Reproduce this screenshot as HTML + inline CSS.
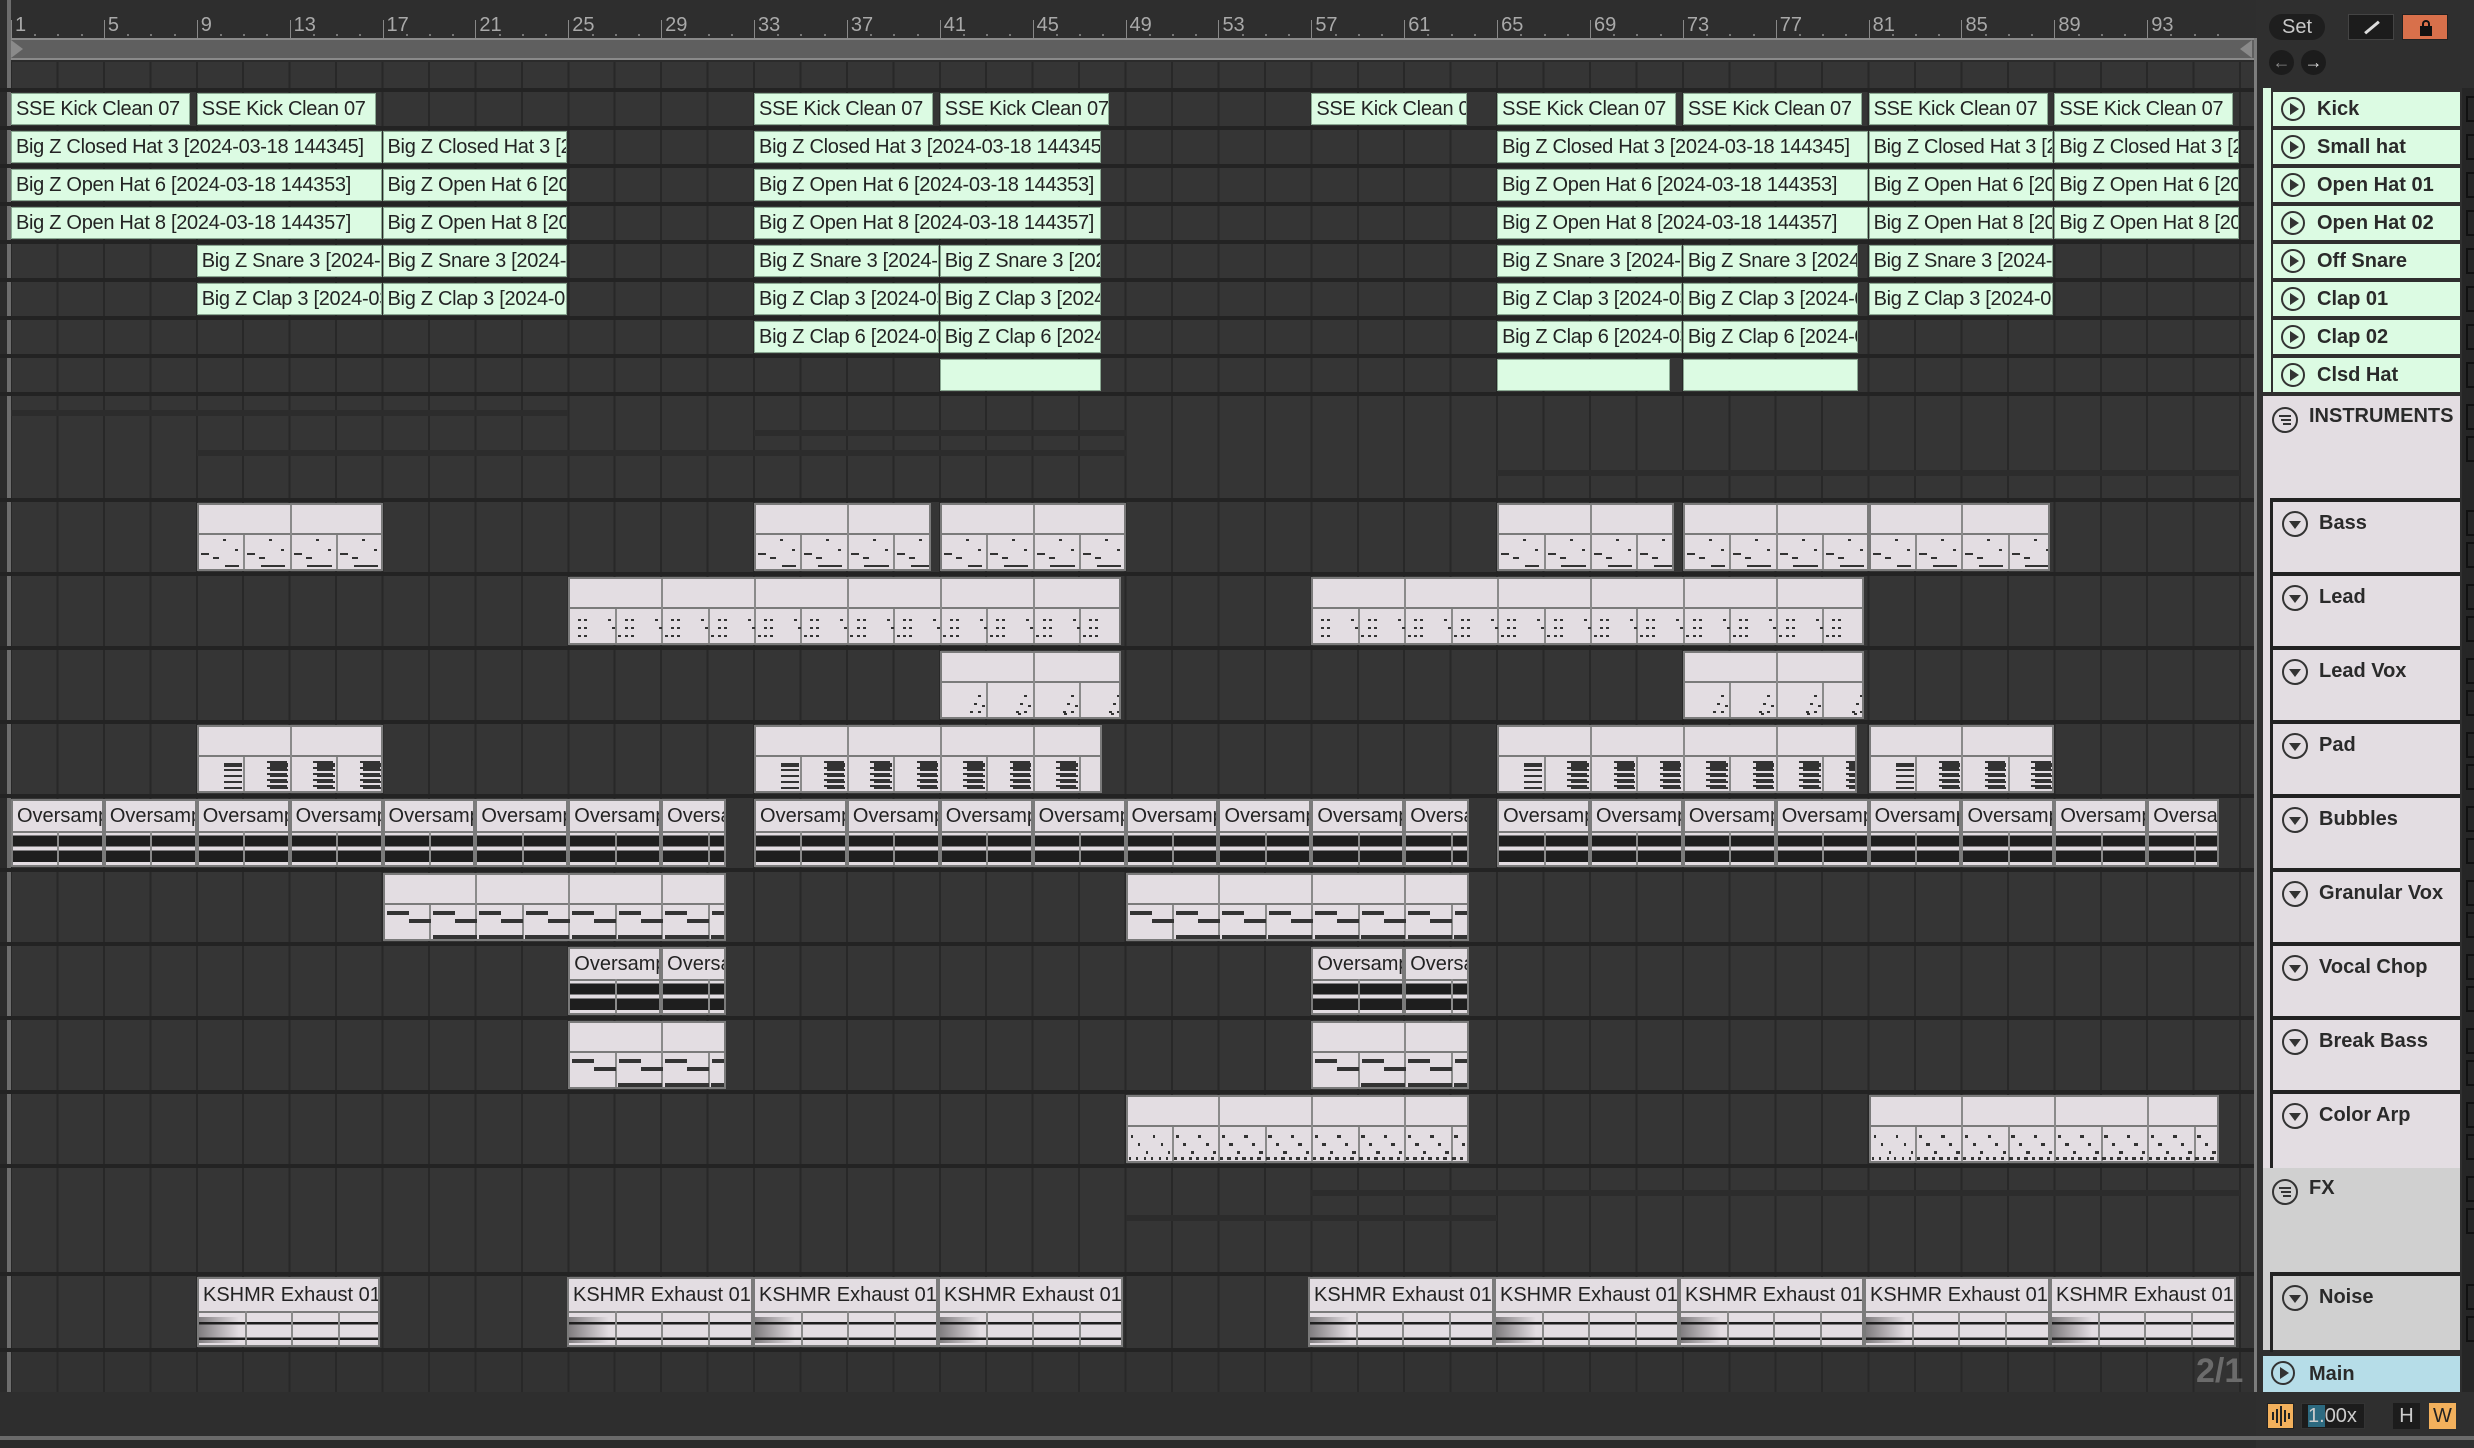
<!DOCTYPE html>
<html><head><meta charset="utf-8">
<style>
*{margin:0;padding:0;box-sizing:border-box}
body{width:2474px;height:1448px;background:#2b2b2b;position:relative;overflow:hidden;font-family:"Liberation Sans",sans-serif}
.a{position:absolute}
.row{position:absolute;left:11px;width:2245px;background-color:#353535;
background-image:repeating-linear-gradient(to right,#282828 0,#282828 2px,transparent 2px,transparent 46.44px);background-position:-1px 0}
.sep{position:absolute;left:0;width:2256px;background:#232323}
.clip{position:absolute;overflow:hidden;white-space:nowrap}
.dc{background:#dcfbe3;border:1px solid #8aa892;color:#232323;font-size:20px;line-height:30px;padding-left:4px;letter-spacing:-0.3px}
.mc{background:#e3dde2;border:2px solid #7a7a7a}
.mh{position:absolute;left:0;right:0;top:0;border-bottom:2px solid #7a7a7a}
.ac{background:#e3dde2;border:2px solid #7a7a7a;color:#232323;font-size:20px;padding-left:4px}
.hd{position:absolute;left:2273px;width:187px;color:#2a2a2a;font-weight:bold;font-size:20px}
.ic{position:absolute;width:24px;height:24px;border:2px solid #333;border-radius:50%}
.rn{position:absolute;top:14px;color:#a9a9a9;font-size:20px}
.tl{position:absolute;top:1398px;color:#9a9a9a;font-size:20px}
</style></head><body>
<div class="a" style="left:0;top:0;width:2256px;height:60px;background:#2e2e2e"></div>
<div class="a" style="left:11px;top:38px;width:2245px;height:22px;background:#5f5f5f;border-top:2px solid #8a8a8a;border-bottom:2px solid #8a8a8a"></div>
<div class="a" style="left:11px;top:40px;width:0;height:0;border-top:9px solid transparent;border-bottom:9px solid transparent;border-left:12px solid #8a8a8a"></div>
<div class="a" style="left:2240px;top:40px;width:0;height:0;border-top:9px solid transparent;border-bottom:9px solid transparent;border-right:12px solid #8a8a8a"></div>
<div class="a" style="left:7px;top:0;width:4px;height:1440px;background:#6d6d6d"></div>
<div id="g"></div>
<div class="a" style="left:2256px;top:0;width:218px;height:1448px;background:#2f2f2f"></div>
<div class="a" style="left:2254px;top:38px;width:3px;height:1354px;background:#7d7d7d"></div>
<div class="a" style="left:2462px;top:88px;width:12px;height:1304px;background:#262626"></div>
<div class="a" style="left:2269px;top:14px;width:56px;height:26px;border-radius:13px;background:#1e1e1e;color:#c8c8c8;font-size:20px;text-align:center;line-height:26px">Set</div>
<div class="a" style="left:2348px;top:14px;width:46px;height:26px;background:#1c1c1c;border:1px solid #444"><div class="a" style="left:14px;top:11px;width:18px;height:3px;background:#ddd;transform:rotate(-40deg)"></div></div>
<div class="a" style="left:2402px;top:14px;width:46px;height:26px;background:#d8704b;border:1px solid #222"><div class="a" style="left:17px;top:11px;width:12px;height:10px;background:#111"></div><div class="a" style="left:19px;top:5px;width:8px;height:9px;border:2px solid #111;border-bottom:none;border-radius:4px 4px 0 0"></div></div>
<div class="a" style="left:2269px;top:50px;width:25px;height:25px;border-radius:50%;background:#1c1c1c;color:#888;font-size:18px;text-align:center;line-height:25px">&#8592;</div>
<div class="a" style="left:2301px;top:50px;width:25px;height:25px;border-radius:50%;background:#1c1c1c;color:#ddd;font-size:18px;text-align:center;line-height:25px">&#8594;</div>
<div class="a" style="left:0;top:1392px;width:2256px;height:44px;background:#2e2e2e"></div>
<div class="a" style="left:0;top:1436px;width:2474px;height:4px;background:#6a6a6a"></div>
<div class="a" style="left:2196px;top:1352px;color:#6b6b6b;font-size:34px;font-weight:bold">2/1</div>
<div class="a" style="left:2267px;top:1403px;width:27px;height:26px;background:#f2b05c;border:1px solid #222"></div>
<svg class="a" style="left:2267px;top:1403px" width="27" height="26"><path d="M6 9v8M10 6v14M14 3v20M18 7v12M22 10v6" stroke="#222" stroke-width="2"/></svg>
<div class="a" style="left:2301px;top:1403px;width:64px;height:26px;background:#1c1c1c;border:1px solid #333;color:#ccc;font-size:20px;line-height:24px;padding-left:6px"><span style="background:#2d6a80">1.</span>00x</div>
<div class="a" style="left:2393px;top:1403px;width:27px;height:26px;background:#1c1c1c;color:#ccc;font-size:20px;text-align:center;line-height:26px">H</div>
<div class="a" style="left:2429px;top:1403px;width:27px;height:26px;background:#f2b05c;color:#222;font-size:20px;text-align:center;line-height:26px">W</div>
<script>
const X=b=>11+(b-1)*23.22;
let h='';
for(let b=1;b<=93;b+=4){let x=X(b);h+=`<div class="a" style="left:${x}px;top:20px;width:1px;height:18px;background:#888"></div><div class="rn" style="left:${x+4}px">${b}</div>`;
for(let k=1;k<4;k++)h+=`<div class="a" style="left:${X(b+k)}px;top:34px;width:2px;height:2px;background:#777"></div>`;}
const tracks=[];
function tr(top,ht){tracks.push([top,ht]);h+=`<div class="row" style="top:${top}px;height:${ht-4}px"></div><div class="sep" style="top:${top+ht-4}px;height:4px"></div>`;}
h+=`<div class="row" style="top:62px;height:26px"></div><div class="sep" style="top:88px;height:4px"></div>`;
for(let i=0;i<8;i++)tr(92+i*38,38);
tr(396,106);
for(let i=0;i<9;i++)tr(502+i*74,74);
tr(1168,108);tr(1276,76);
h+=`<div class="row" style="top:1352px;height:40px;background-color:#323232"></div>`;
[[410,1,25],[430,33,49],[450,9,49],[470,65,97],[1190,57,97],[1215,49,65]].forEach(([y,a,b])=>h+=`<div class="a" style="left:${X(a)}px;top:${y}px;width:${X(b)-X(a)}px;height:6px;background:#2c2c2c"></div>`);
function dc(r,a,b,t){let [top]=tracks[r];h+=`<div class="clip dc" style="left:${X(a)}px;top:${top+1}px;width:${X(b)-X(a)-1}px;height:32px">${t}</div>`;}
const K='SSE Kick Clean 07',CH='Big Z Closed Hat 3 [2024-03-18 144345]',O6='Big Z Open Hat 6 [2024-03-18 144353]',O8='Big Z Open Hat 8 [2024-03-18 144357]',SN='Big Z Snare 3 [2024-03-18]',C3='Big Z Clap 3 [2024-03-18]',C6='Big Z Clap 6 [2024-03-18]';
[[1,9],[9,17],[33,41],[41,48.6],[57,64],[65,73],[73,81],[81,89],[89,97]].forEach(([a,b])=>dc(0,a,b-0.25,K));
[[1,17],[17,25],[33,48],[65,81],[81,89],[89,97]].forEach(([a,b])=>{dc(1,a,b,CH);dc(2,a,b,O6);dc(3,a,b,O8);});
[[9,17],[17,25],[33,41],[41,48],[65,73],[73,80.6],[81,89]].forEach(([a,b])=>{dc(4,a,b,SN);dc(5,a,b,C3);});
[[33,41],[41,48],[65,73],[73,80.6]].forEach(([a,b])=>dc(6,a,b,C6));
[[41,48],[65,72.5],[73,80.6]].forEach(([a,b])=>dc(7,a,b,''));
function seg(a,b,inner){let s='';for(let q=a+2;q<b-0.1;q+=2)s+=`<div class="a" style="left:${X(q)-X(a)-2}px;top:${inner}px;bottom:0;width:2px;background:#8a8a8a"></div>`;return s;}
function hdiv(a,b){let s='';for(let q=a+4;q<b-0.1;q+=4)s+=`<div class="a" style="left:${X(q)-X(a)-2}px;top:0;bottom:0;width:2px;background:#8a8a8a"></div>`;return s;}
function mc(r,a,b,notes){let [top,ht]=tracks[r];let H=ht-6,hh=Math.round(H*0.44);let w=X(b)-X(a);
let n='';for(let q=a;q<b-0.1;q+=2)n+=notes(X(q)-X(a),hh);
h+=`<div class="clip mc" style="left:${X(a)}px;top:${top+1}px;width:${w}px;height:${H}px"><div class="mh" style="height:${hh}px"></div>${hdiv(a,b)}${seg(a,b,hh)}${n}</div>`;}
const dot=(x,y,w=3,hh=2)=>`<div class="a" style="left:${x}px;top:${y}px;width:${w}px;height:${hh}px;background:#333"></div>`;
const bassN=(x,y)=>dot(x+2,y+18,8)+dot(x+14,y+22,6)+dot(x+24,y+4)+dot(x+36,y+14)+dot(x+26,y+30,14)+dot(x+62,y+30,14);
const leadN=(x,y)=>dot(x+8,y+10)+dot(x+14,y+10)+dot(x+8,y+18)+dot(x+14,y+18)+dot(x+8,y+26)+dot(x+38,y+10)+dot(x+42,y+18)+dot(x+48,y+26)+dot(x+14,y+26);
const voxN=(x,y)=>dot(x+28,y+28)+dot(x+32,y+20)+dot(x+36,y+12)+dot(x+36,y+28)+dot(x+40,y+22)+dot(x+76,y+30);
const padN=(x,y)=>{let s='';for(let k=0;k<5;k++)s+=dot(x+25,y+6+k*6,18,k==0?4:2)+dot(x+68,y+4+k*6,20,2);return s;};
const granN=(x,y)=>dot(x+2,y+6,22,4)+dot(x+24,y+14,22,4)+dot(x+48,y+30,44,4);
const arpN=(x,y)=>{let s='';for(let k=0;k<12;k++)s+=dot(x+3+k*7.5,y+8+(k%3)*8,2,3)+dot(x+1+k*7.5,y+30,2,3);return s;};
[[9,17],[33,40.6],[41,49],[65,72.6],[73,81],[81,88.8]].forEach(([a,b])=>mc(9,a,b,bassN));
[[25,48.8],[57,80.8]].forEach(([a,b])=>mc(10,a,b,leadN));
[[41,48.8],[73,80.8]].forEach(([a,b])=>mc(11,a,b,voxN));
[[9,17],[33,48],[65,80.5],[81,89]].forEach(([a,b])=>mc(12,a,b,padN));
[[17,31.8],[49,63.8]].forEach(([a,b])=>mc(14,a,b,granN));
[[25,31.8],[57,63.8]].forEach(([a,b])=>mc(16,a,b,granN));
[[49,63.8],[81,96.1]].forEach(([a,b])=>mc(17,a,b,arpN));
const wave='background:linear-gradient(to bottom,#e3dde2 8%,#1e1e1e 8%,#1e1e1e 42%,#e3dde2 42%,#e3dde2 54%,#1e1e1e 54%,#1e1e1e 90%,#e3dde2 90%)';
const wave2='background:linear-gradient(to bottom,#e3dde2 28%,#1e1e1e 28%,#1e1e1e 36%,#e3dde2 36%,#e3dde2 76%,#1e1e1e 76%,#1e1e1e 84%,#e3dde2 84%)';
function ac(r,a,b,t,wv){let [top,ht]=tracks[r];let H=ht-6,hh=Math.round(H*0.44);let w=X(b)-X(a);
let s=`<div class="a" style="left:0;right:0;top:${hh+2}px;bottom:0;${wv}"></div>`;
for(let q=a+2;q<b-0.1;q+=2)s+=`<div class="a" style="left:${X(q)-X(a)-2}px;top:${hh}px;bottom:0;width:2px;background:#8a8a8a"></div>`;
h+=`<div class="clip ac" style="left:${X(a)}px;top:${top+1}px;width:${w}px;height:${H}px"><div class="mh" style="height:${hh+2}px;line-height:${hh}px;padding-left:4px">${t}</div>${s}</div>`;}
const OV='Oversampled';
for(let q=1;q<31;q+=4)ac(13,q,Math.min(q+4,31.8),OV,wave);
for(let q=33;q<63;q+=4)ac(13,q,Math.min(q+4,63.8),OV,wave);
for(let q=65;q<97;q+=4)ac(13,q,Math.min(q+4,96.1),OV,wave);
[[25,29],[29,31.8],[57,61],[61,63.8]].forEach(([a,b])=>ac(15,a,b,OV,wave));
const KS='KSHMR Exhaust 01';
const nzpx=[[197,380],[567,753],[753,938],[938,1123],[1308,1494],[1494,1679],[1679,1864],[1864,2050],[2050,2236]];
nzpx.forEach(([x1,x2])=>{let [top,ht]=tracks[19];let H=ht-6,hh=32;let s=`<div class="a" style="left:0;right:0;top:${hh+2}px;bottom:0;${wave2}"></div><div class="a" style="left:0;top:${hh+6}px;width:40px;height:26px;background:linear-gradient(to right,#1e1e1e,transparent);opacity:.5"></div>`;
for(let x=46;x<x2-x1-4;x+=46.44)s+=`<div class="a" style="left:${x}px;top:${hh}px;bottom:0;width:2px;background:#8a8a8a"></div>`;
h+=`<div class="clip ac" style="left:${x1}px;top:${top+1}px;width:${x2-x1}px;height:${H}px"><div class="mh" style="height:${hh+2}px;line-height:${hh}px;padding-left:4px">${KS}</div>${s}</div>`;});
['0:00','0:15','0:30','0:45','1:00','1:15','1:30','1:45','2:00','2:15','2:30'].forEach((t,i)=>{let x=13+i*202.6;h+=`<div class="a" style="left:${x}px;top:1394px;width:1px;height:18px;background:#888"></div><div class="tl" style="left:${x+3}px">${t}</div>`;
for(let k=1;k<3;k++)h+=`<div class="a" style="left:${x+k*67.5}px;top:1394px;width:2px;height:5px;background:#777"></div>`;});
document.getElementById('g').innerHTML=h;
let g='';
const drums=['Kick','Small hat','Open Hat 01','Open Hat 02','Off Snare','Clap 01','Clap 02','Clsd Hat'];
g+=`<div class="a" style="left:2263px;top:88px;width:8px;height:304px;background:#dcfbe3"></div>`;
drums.forEach((n,i)=>{let t=92+i*38;g+=`<div class="hd" style="top:${t}px;height:34px;background:#dcfbe3;line-height:34px;padding-left:44px">${n}<div class="ic" style="left:8px;top:5px"><div class="a" style="left:7px;top:4px;border-top:6px solid transparent;border-bottom:6px solid transparent;border-left:9px solid #333"></div></div></div>`;});
const lst=`<svg class="a" style="left:8px;top:10px" width="28" height="28"><circle cx="14" cy="14" r="12" fill="none" stroke="#333" stroke-width="2"/><path d="M8 10h12M10 14h10M12 18h8" stroke="#333" stroke-width="2"/></svg>`;
g+=`<div class="a" style="left:2263px;top:396px;width:197px;height:772px;background:#e3dde2"></div><div class="hd" style="left:2263px;width:197px;top:396px;height:40px;line-height:40px;padding-left:46px;background:#e3dde2">INSTRUMENTS${lst}</div>`;
const ins=['Bass','Lead','Lead Vox','Pad','Bubbles','Granular Vox','Vocal Chop','Break Bass','Color Arp'];
const dn=`<svg class="a" style="left:8px;top:8px" width="28" height="28"><circle cx="14" cy="14" r="12" fill="none" stroke="#333" stroke-width="2"/><path d="M8 11h12l-6 8z" fill="#333"/></svg>`;
ins.forEach((n,i)=>{let t=502+i*74;g+=`<div class="a" style="left:2270px;top:${t-4}px;width:190px;height:4px;background:#222"></div><div class="a" style="left:2270px;top:${t-4}px;width:3px;height:78px;background:#222"></div><div class="hd" style="top:${t}px;height:70px;background:#e3dde2;padding:10px 0 0 46px">${n}${dn}</div>`;});
g+=`<div class="a" style="left:2263px;top:1168px;width:197px;height:182px;background:#d0d0d0"></div><div class="hd" style="left:2263px;width:197px;top:1168px;height:40px;line-height:40px;padding-left:46px;background:#d0d0d0">FX${lst}</div>`;
g+=`<div class="a" style="left:2270px;top:1272px;width:190px;height:4px;background:#222"></div><div class="a" style="left:2270px;top:1272px;width:3px;height:80px;background:#222"></div><div class="hd" style="top:1276px;height:72px;background:#d0d0d0;padding:10px 0 0 46px">Noise${dn}</div>`;
g+=`<div class="hd" style="left:2263px;width:197px;top:1356px;height:36px;background:#b6dde8;line-height:36px;padding-left:46px">Main<div class="ic" style="left:8px;top:5px"><div class="a" style="left:7px;top:4px;border-top:6px solid transparent;border-bottom:6px solid transparent;border-left:9px solid #333"></div></div></div>`;
for(let i=0;i<8;i++)g+=`<div class="a" style="left:2466px;top:${96+i*38}px;width:10px;height:26px;border:2px solid #111"></div>`;
for(let i=0;i<12;i++){let t=[396,502,576,650,724,798,872,946,1020,1094,1168,1276][i];g+=`<div class="a" style="left:2466px;top:${t+8}px;width:10px;height:26px;border:2px solid #111"></div><div class="a" style="left:2466px;top:${t+40}px;width:10px;height:26px;border:2px solid #111"></div>`;}
document.body.insertAdjacentHTML('beforeend',g);
</script>
</body></html>
